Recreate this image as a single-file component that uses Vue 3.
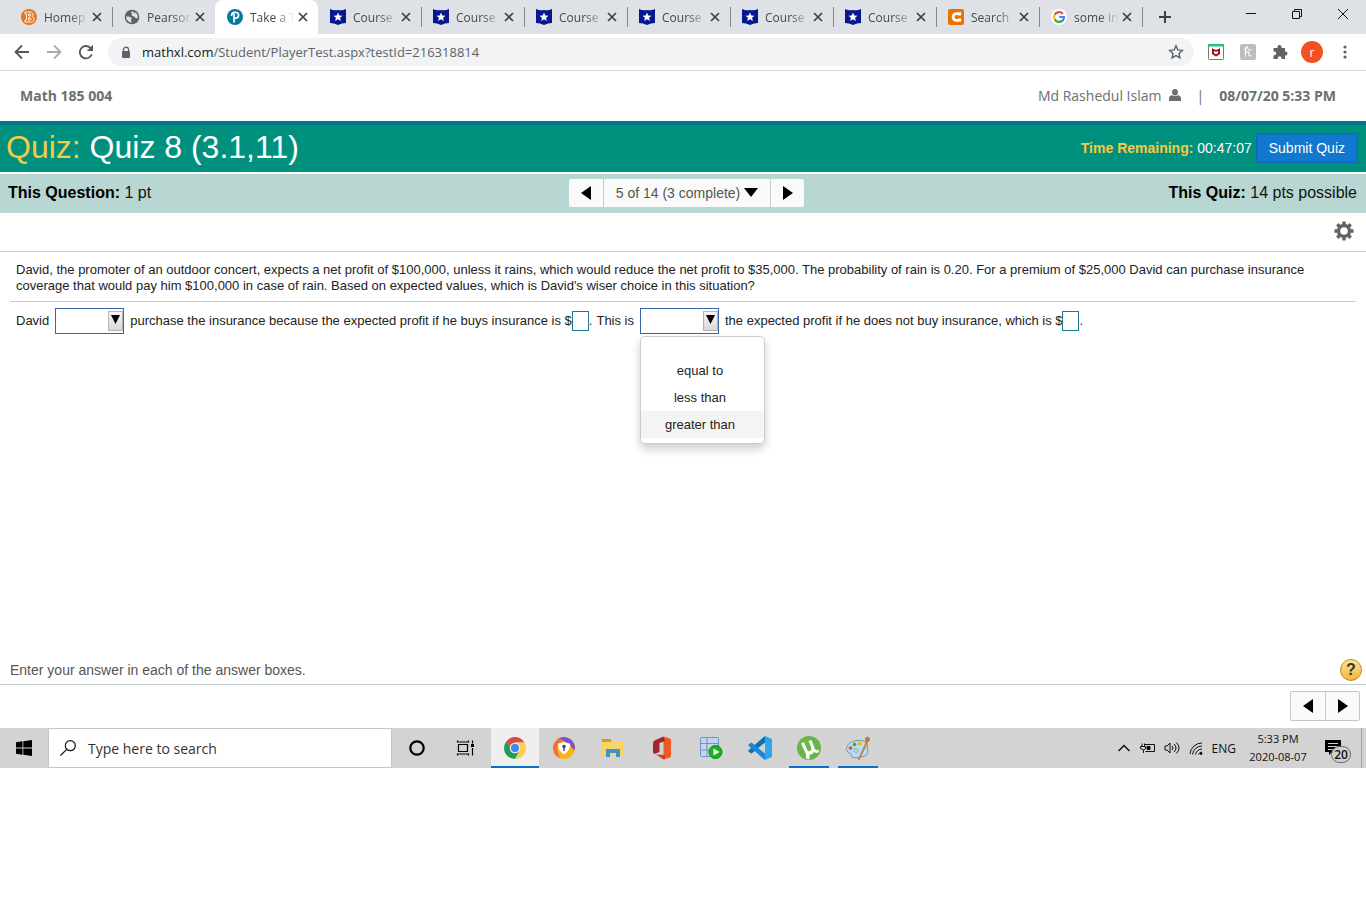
<script setup>
import { ref } from 'vue'

const tabs = [
  { icon: 'bb', title: 'Homep' },
  { icon: 'globe', title: 'Pearson' },
  { icon: 'pearson', title: 'Take a T', active: true },
  { icon: 'star', title: 'Course' },
  { icon: 'star', title: 'Course' },
  { icon: 'star', title: 'Course' },
  { icon: 'star', title: 'Course' },
  { icon: 'star', title: 'Course' },
  { icon: 'star', title: 'Course' },
  { icon: 'chegg', title: 'Search' },
  { icon: 'google', title: 'some in' },
]

const options = ['', 'equal to', 'less than', 'greater than']
const hovered = ref(3)
const shouldBuy = ref('')
const comparison = ref('')
const profitWith = ref('')
const profitWithout = ref('')

function pick(option) {
  comparison.value = option
}
</script>

<template>
  <div class="screen">
    <header class="browser">
      <div class="tab-strip">
        <div class="tabs">
          <div v-for="(tab, i) in tabs" :key="i" class="tab" :class="{ active: tab.active, plain: i === 1 }">
            <svg v-if="tab.icon === 'bb'" class="favicon" viewBox="0 0 16 16">
              <circle cx="8" cy="8" r="8" fill="#e6761c" />
              <path d="M4 3h5.500a2.500 2.500 0 0 1 1.600 4.500A2.800 2.800 0 0 1 9.500 13H4v-2h1.500V5H4ZM7.500 5h1.800q1.200 1 0 2H7.500ZM7.500 8.800h2q1.300 1.100 0 2.200h-2Z" fill="none" stroke="#fff" stroke-width=".9" />
            </svg>
            <svg v-else-if="tab.icon === 'globe'" class="favicon" viewBox="0 0 16 16">
              <circle cx="8" cy="8" r="7.300" fill="#5f6368" />
              <path d="M2.200 7.200 5.500 7.800 8 9 7 10.500 7.500 13.800A6 6 0 0 1 2.200 7.200ZM8.500 2 7 3.600 8.200 5 7.400 6.600 10.300 7.500 12 9.400 13.800 8.600A6 6 0 0 0 11.800 3.400L10.500 4.200Z" fill="#dee1e6" />
            </svg>
            <svg v-else-if="tab.icon === 'pearson'" class="favicon" viewBox="0 0 16 16">
              <circle cx="8" cy="8" r="8" fill="#047a9c" />
              <path d="M7 12.800V5M4.600 6.200C4.600 2.500 11.600 2 11.600 6.200 11.600 8.600 9 9.400 7.500 8.900" fill="none" stroke="#fff" stroke-width="1.700" stroke-linecap="round" />
            </svg>
            <svg v-else-if="tab.icon === 'star'" class="favicon" viewBox="0 0 16 16">
              <path d="M0 0Q4 2 8 1 12 2 16 0V14Q12 14 8 16 4 14 0 14Z" fill="#06188f" />
              <path d="m8 3.500 1.300 2.900 3.200.3-2.400 2.100.7 3.200L8 10.300 5.200 12l.7-3.200L3.500 6.700l3.200-.3Z" fill="#fff" />
            </svg>
            <svg v-else-if="tab.icon === 'chegg'" class="favicon" viewBox="0 0 16 16">
              <rect width="16" height="16" rx="2" fill="#eb7100" />
              <path d="M11.700 6.500V4.600H8.500A3.400 3.400 0 0 0 8.500 11.400H11.700V9.500" fill="none" stroke="#fff" stroke-width="2.800" />
            </svg>
            <svg v-else class="favicon" viewBox="0 0 16 16">
              <circle cx="8" cy="8" r="8" fill="#fff" />
              <g fill="none" stroke-width="2.200">
                <path d="M11.800 4.700A5 5 0 0 0 3.700 5.600" stroke="#ea4335" />
                <path d="M3.700 5.500A5 5 0 0 0 3.700 10.500" stroke="#fbbc05" />
                <path d="M3.700 10.400A5 5 0 0 0 11.500 11.600" stroke="#34a853" />
                <path d="M8.200 8H13A5 5 0 0 1 11.300 11.800" stroke="#4285f4" />
              </g>
            </svg>
            <span class="tab-title">{{ tab.title }}</span>
            <button class="tab-close" aria-label="Close tab">
              <svg viewBox="0 0 10 10"><path d="m1 1 8 8M9 1 1 9" /></svg>
            </button>
          </div>
          <button class="new-tab" aria-label="New tab">
            <svg viewBox="0 0 12 12"><path d="M6 0v12M0 6h12" /></svg>
          </button>
        </div>
        <div class="window-controls">
          <button aria-label="Minimize"><svg viewBox="0 0 12 12"><path d="M1 5.500h10" /></svg></button>
          <button aria-label="Restore"><svg viewBox="0 0 12 12"><path d="M1.500 3.500h7v7h-7ZM3.500 3V1.500h7v7H9" /></svg></button>
          <button aria-label="Close"><svg viewBox="0 0 12 12"><path d="m1 1 10 10M11 1 1 11" /></svg></button>
        </div>
      </div>

      <div class="toolbar">
        <button class="nav" aria-label="Back">
          <svg viewBox="0 0 16 16"><path d="M15 8H2M8 1.500 1.500 8 8 14.500" /></svg>
        </button>
        <button class="nav disabled" aria-label="Forward">
          <svg viewBox="0 0 16 16"><path d="M1 8h13M8 1.500 14.500 8 8 14.500" /></svg>
        </button>
        <button class="nav" aria-label="Reload">
          <svg viewBox="0 0 16 16">
            <path d="M13.800 10.400A6.200 6.200 0 1 1 12.400 3.800L14 5.500" />
            <path d="M15 .8v6.200h-6.200Z" class="solid" />
          </svg>
        </button>
        <div class="address">
          <svg class="lock" viewBox="0 0 10 12">
            <path d="M2.500 5V3.200a2.500 2.500 0 0 1 5 0V5" fill="none" stroke="#5f6368" stroke-width="1.300" />
            <rect x="1" y="4.500" width="8" height="7" rx="1" fill="#5f6368" />
          </svg>
          <span class="url"><b>mathxl.com</b>/Student/PlayerTest.aspx?testId=216318814</span>
          <button class="bookmark" aria-label="Bookmark this page">
            <svg viewBox="0 0 16 16"><path d="m8 1.800 1.800 4.100 4.500.5-3.300 3 .9 4.500L8 11.600l-3.900 2.300.9-4.500-3.300-3 4.500-.5Z" /></svg>
          </button>
        </div>
        <div class="extensions">
          <svg viewBox="0 0 16 16">
            <rect x=".5" y=".5" width="15" height="15" rx="1" fill="#fff" stroke="#77797c" />
            <path d="M0 0h16v2.500H0Z" fill="#20c57c" />
            <path d="M4 4.200 8 6l4-1.800v6L8 12.500l-4-2.300ZM6 7v2.200l2 1 2-1V7L8 8Z" fill="#a3121d" fill-rule="evenodd" />
          </svg>
          <svg viewBox="0 0 16 16">
            <rect width="16" height="16" rx="2" fill="#bdbdbd" />
            <path d="M4 5.500C6 5.500 8 4 7.300 3S5.500 3.500 5.500 6v6.500M5.500 9.500C7 7 9 7 8.800 9S8.500 12.800 11.500 11.500M8 5.800h3.500" fill="none" stroke="#fff" stroke-width="1.100" />
          </svg>
          <svg viewBox="0 0 16 16">
            <path d="M2 4h3.500V3a2 2 0 1 1 4 0v1H13v3.500h.500a2 2 0 1 1 0 4H13V15H9.500v-.8a1.900 1.900 0 0 0-3.800 0v.8H1.500v-3.800h.8a1.900 1.900 0 0 0 0-3.800H1.500V4Z" fill="#5f6368" />
          </svg>
        </div>
        <button class="avatar">r</button>
        <button class="menu" aria-label="Menu">
          <svg viewBox="0 0 4 16"><circle cx="2" cy="3" r="1.600" /><circle cx="2" cy="8" r="1.600" /><circle cx="2" cy="13" r="1.600" /></svg>
        </button>
      </div>
    </header>

    <main class="quiz">
      <div class="account">
        <strong>Math 185 004</strong>
        <div class="account-user">
          <span>Md Rashedul Islam</span>
          <svg viewBox="0 0 12 12"><ellipse cx="6" cy="3.200" rx="2.900" ry="3.200" /><path d="M0 12V9.500Q0 6.400 3.200 6.200 6 8 8.800 6.200 12 6.400 12 9.500V12Z" /></svg>
          <span class="bar">|</span>
          <strong>08/07/20 5:33 PM</strong>
        </div>
      </div>

      <div class="title-bar">
        <h1><span>Quiz:</span> Quiz 8 (3.1,11)</h1>
        <div class="timer">
          <div><b>Time Remaining:</b> 00:47:07</div>
          <button class="submit">Submit Quiz</button>
        </div>
      </div>

      <div class="sub-bar">
        <div class="question-points"><b>This Question:</b> 1 pt</div>
        <div class="pager">
          <button aria-label="Previous question"><svg class="arrow" viewBox="0 0 10 14"><path d="M10 0v14L0 7Z" /></svg></button>
          <button class="pager-list">5 of 14 (3 complete)<svg class="down" viewBox="0 0 14 9"><path d="M0 0h14L7 9Z" /></svg></button>
          <button aria-label="Next question"><svg class="arrow" viewBox="0 0 10 14"><path d="m0 0v14l10-7Z" /></svg></button>
        </div>
        <div class="quiz-points"><b>This Quiz:</b> 14 pts possible</div>
      </div>

      <div class="settings">
        <button aria-label="Settings">
          <svg viewBox="0 0 20 20">
            <circle cx="10" cy="10" r="5.500" fill="none" stroke="#636363" stroke-width="3.400" />
            <path d="M10 .5v3M10 16.500v3M.5 10h3M16.500 10h3M3.300 3.300l2.200 2.200M14.500 14.500l2.200 2.200M3.300 16.700l2.200-2.200M14.500 5.500l2.200-2.200" stroke="#636363" stroke-width="3.400" />
          </svg>
        </button>
      </div>

      <section class="question">
        <p class="prompt">
          David, the promoter of an outdoor concert, expects a net profit of $100,000, unless it rains, which would reduce the net profit to $35,000. The probability of rain is 0.20. For a premium of $25,000 David can purchase insurance coverage that would pay him $100,000 in case of rain. Based on expected values, which is David's wiser choice in this situation?
        </p>
        <div class="answer">
          <label for="should-buy">David</label>
          <div class="dropdown">
            <select id="should-buy" v-model="shouldBuy">
              <option value=""></option>
              <option>should</option>
              <option>should not</option>
            </select>
            <i><svg viewBox="0 0 10 10"><path d="M0 0h10L5 10Z" /></svg></i>
          </div>
          <label for="profit-with">purchase the insurance because the expected profit if he buys insurance is $</label>
          <input id="profit-with" v-model="profitWith" type="text">
          <span>.</span>
          <label class="sentence" for="comparison">This is</label>
          <div class="dropdown wide">
            <select id="comparison" v-model="comparison">
              <option v-for="option in options" :key="option" :value="option">{{ option }}</option>
            </select>
            <i><svg viewBox="0 0 10 10"><path d="M0 0h10L5 10Z" /></svg></i>
            <ul class="choices" role="listbox" aria-label="Comparison">
              <li
                v-for="(option, i) in options"
                :key="i"
                role="option"
                :aria-selected="comparison === option"
                :class="{ hovered: hovered === i }"
                @mouseenter="hovered = i"
                @click="pick(option)"
              >{{ option }}</li>
            </ul>
          </div>
          <label for="profit-without">the expected profit if he does not buy insurance, which is $</label>
          <input id="profit-without" v-model="profitWithout" type="text">
          <span>.</span>
        </div>
      </section>

      <div class="hint">
        <span>Enter your answer in each of the answer boxes.</span>
        <button class="help">?</button>
      </div>
      <div class="steps">
        <div class="pager outlined">
          <button aria-label="Back one step"><svg class="arrow" viewBox="0 0 10 14"><path d="M10 0v14L0 7Z" /></svg></button>
          <button aria-label="Forward one step"><svg class="arrow" viewBox="0 0 10 14"><path d="m0 0v14l10-7Z" /></svg></button>
        </div>
      </div>
    </main>

    <footer class="taskbar">
      <button class="start" aria-label="Start">
        <svg viewBox="0 0 16 16"><path d="M0 2.200 6.500 1.300V7.600H0ZM7.300 1.200 16 0V7.600H7.300ZM0 8.400H6.500V14.700L0 13.800ZM7.300 8.400H16V16L7.300 14.800Z" /></svg>
      </button>
      <label class="search">
        <svg viewBox="0 0 16 16"><circle cx="10.300" cy="5.700" r="5" /><path d="M6.700 9.300.5 15.500" /></svg>
        <input type="text" placeholder="Type here to search">
      </label>
      <div class="apps">
        <button class="app" aria-label="Cortana">
          <svg viewBox="0 0 24 24"><circle cx="12" cy="12" r="6.700" fill="none" stroke="#000" stroke-width="2.200" /></svg>
        </button>
        <button class="app" aria-label="Task view">
          <svg viewBox="0 0 24 24" fill="none" stroke="#000" stroke-width="1.200"><path d="M4.500 8.500h9v7h-9ZM3.500 4.500v1.500h11V4.500M3.500 19.500V18h11v1.500M18.500 4.500v3M18.500 12v7.500" /><path d="M17 9.500h3" stroke-width="3" /></svg>
        </button>
        <button class="app current running" aria-label="Chrome">
          <svg viewBox="0 0 24 24">
            <path d="M12 12 2.500 6.500A11 11 0 0 1 21.500 6.500H12Z" fill="#dd4b3e" />
            <path d="M12 12 2.500 6.500A11 11 0 0 0 12 23L16.800 14.700Z" fill="#1f9d58" />
            <path d="M12 6.500h9.500A11 11 0 0 1 12 23l4.800-8.300Z" fill="#ffcd46" />
            <circle cx="12" cy="12" r="5.300" fill="#f1f1f1" />
            <circle cx="12" cy="12" r="4.200" fill="#4688f1" />
          </svg>
        </button>
        <button class="app" aria-label="Secure browser">
          <svg viewBox="0 0 24 24">
            <circle cx="12" cy="12" r="11" fill="#f7b51c" />
            <path d="M6 3A11 11 0 0 1 22.800 14Q19 12 18 8 11 5 6 3Z" fill="#7950d9" />
            <path d="M1.200 14A11 11 0 0 1 7 2.200L12 4 6 8Q4 14 8 22A11 11 0 0 1 1.200 14Z" fill="#f0703a" />
            <path d="M12 6q3 1.500 6 1.500.5 7-6 11-6.500-4-6-11Q9 7.500 12 6Z" fill="#fff" />
            <circle cx="12" cy="10.500" r="1.700" fill="#3d3f68" /><path d="M11.300 11h1.400v4h-1.400Z" fill="#3d3f68" />
          </svg>
        </button>
        <button class="app" aria-label="File Explorer">
          <svg viewBox="0 0 24 24">
            <path d="M1 3h9l1 2h12v15H1Z" fill="#fbd264" /><path d="M1 3h9v3H1Z" fill="#d69c1e" />
            <path d="M5 13h14v8h-4v-4H9v4H5Z" fill="#3c94ca" />
          </svg>
        </button>
        <button class="app" aria-label="Office">
          <svg viewBox="0 0 24 24">
            <path d="M13.500.5 20 2.500Q21 3 21 4v16q0 1-1 1.500l-6.500 2Z" fill="#ee5a24" />
            <path d="M13.500.5 15 5 9.500 7v9L4.500 18Q3 17.500 3 16V7q0-1.500 1.500-2.500Z" fill="#a4262c" />
            <path d="m6 18.500 9 .5v4l-1.500.5Z" fill="#d83b20" />
          </svg>
        </button>
        <button class="app" aria-label="Server">
          <svg viewBox="0 0 24 24">
            <rect x="1.500" y="1.500" width="18" height="19" rx="1" fill="#c3d5ef" stroke="#6e90c3" />
            <path d="M2 7.500h17M2 14h17M8 2v18" stroke="#7291bd" />
            <circle cx="16.500" cy="16" r="6.500" fill="#16b51c" stroke="#098a0e" /><path d="m14.500 12.500 6 3.500-6 3.500Z" fill="#fff" />
          </svg>
        </button>
        <button class="app" aria-label="Code editor">
          <svg viewBox="0 0 24 24">
            <path d="M17 0v6.500L3.500 17.500 1 16 0 14.700Z" fill="#0972b8" /><path d="m3.500 6.500 13.500 11V24L0 9.300 1 8Z" fill="#168bd4" />
            <path d="M17 0 24 3v18l-7 3Z" fill="#2da7ef" />
          </svg>
        </button>
        <button class="app running inset" aria-label="Torrent client">
          <svg viewBox="0 0 24 24">
            <circle cx="12" cy="12" r="12" fill="#6ab44a" />
            <path d="M4 7.500 7 6l3 7.500q1 2.500 3 1.500t1-4L11.500 5l3-1L18 13q1 2 3 .5l1 2.500q-3.500 2-5-.5-1 3.500-4.500 3 .5 2.500-.5 5L8.500 22Q10 20 8 16Z" fill="#fff" />
          </svg>
        </button>
        <button class="app running inset" aria-label="Paint">
          <svg viewBox="0 0 24 24">
            <path d="M.5 14Q0 6 11 4.500q9-1 10.500 4.500-1 3 .5 6 0 5-7 6-7 1.500-9.500 0 1-2.500-1-3Q1.500 17 .5 14Z" fill="#b8dcee" stroke="#6f9cb4" />
            <circle cx="4.500" cy="12" r="1.800" fill="#d94b3b" /><circle cx="8.500" cy="8.500" r="1.800" fill="#4ba52f" /><circle cx="13.500" cy="7.500" r="2" fill="#efb52e" /><circle cx="10" cy="14.500" r="1.700" fill="#eef8fb" stroke="#639bb9" />
            <path d="M11.500 23.500 20 6l1.800 1L13.500 24Z" fill="#d28244" /><path d="m19.500 6-.5-3.500 2-2 3 1.500-.5 2.500-2 2.500Z" fill="#b8764a" />
          </svg>
        </button>
      </div>
      <div class="tray">
        <svg viewBox="0 0 16 16"><path d="m2.500 11 5.500-5.500 5.500 5.500" stroke-width="1.500" /></svg>
        <svg viewBox="0 0 16 16"><path d="M5 4.500h9.500v7H5.500M2 3.500v3M4.500 3.500v3M.500 6.500h5v2L3.500 10 .500 8.500ZM3.500 10v3" /><path d="M7 6.500h3v3H7Z" fill="#000" /></svg>
        <svg viewBox="0 0 16 16"><path d="M1 6h2l3-3v10l-3-3H1ZM8 6q2 2 0 4M10 4q4 4 0 8M12.500 2.500q5 5.500 0 11" /></svg>
        <svg viewBox="0 0 16 16"><path d="M2 14A12 12 0 0 1 14 3M4.500 14.500A9.500 9.500 0 0 1 14 6M7.500 14.500A6.500 6.500 0 0 1 14 9M10.500 14.500A4 4 0 0 1 14 12" /><circle cx="13" cy="13.500" r="1" fill="#000" /></svg>
        <span>ENG</span>
        <div class="clock"><span>5:33 PM</span><span>2020-08-07</span></div>
        <div class="notifications">
          <svg viewBox="0 0 16 16"><path d="M0 0h16v12H7l-3 3v-3H0Z" fill="#000" stroke="none" /><path d="M3 3.500h10M3 6.500h10M3 9.500h6" stroke="#d2d2d2" /></svg>
          <b>20</b>
        </div>
        <i class="peek"></i>
      </div>
    </footer>
  </div>
</template>

<style>
body {
  margin: 0;
  background: #fff;
}
</style>

<style scoped>
* {
  box-sizing: border-box;
}

.screen {
  font-family: "Liberation Sans", Arial, sans-serif;
  font-size: 13px;
  color: #222;
}

button {
  display: flex;
  align-items: center;
  justify-content: center;
  padding: 0;
  border: 0;
  background: none;
  font: inherit;
  color: inherit;
}

svg {
  display: block;
  flex: none;
}

/* browser chrome */
.browser {
  font-family: "Open Sans", "Noto Sans", sans-serif;
  border-bottom: 1px solid #d6d8da;
}

.tab-strip {
  display: flex;
  justify-content: space-between;
  height: 34px;
  background: #dee1e6;
}

.tabs {
  display: flex;
  padding-left: 9px;
}

.tab {
  position: relative;
  display: flex;
  align-items: center;
  width: 103px;
  padding: 0 9px 0 12px;
  font-size: 12px;
  color: #45494d;
}

.tab::after {
  content: "";
  position: absolute;
  right: -1px;
  top: 7px;
  width: 1px;
  height: 20px;
  background: #85888c;
}

.tab.active::after,
.tab.plain::after {
  display: none;
}

.tab.active {
  background: #fff;
  border-radius: 8px 8px 0 0;
}

.favicon {
  width: 16px;
  height: 16px;
}

.tab-title {
  flex: 1;
  margin-left: 7px;
  overflow: hidden;
  white-space: nowrap;
  mask-image: linear-gradient(90deg, #000 55%, transparent 95%);
}

.tab-close {
  width: 12px;
  height: 16px;
}

.tab-close svg {
  width: 10px;
  height: 10px;
  stroke: #3c4043;
  stroke-width: 1.7;
}

.new-tab {
  width: 46px;
}

.new-tab svg {
  width: 12px;
  height: 12px;
  stroke: #3c4043;
  stroke-width: 2;
}

.window-controls {
  display: flex;
}

.window-controls button {
  width: 46px;
  height: 28px;
}

.window-controls svg {
  width: 12px;
  height: 12px;
  fill: none;
  stroke: #111;
}

.toolbar {
  display: flex;
  align-items: center;
  height: 36px;
  padding: 0 11px 0 6px;
}

.nav {
  width: 32px;
  height: 28px;
}

.nav svg {
  width: 16px;
  height: 16px;
  fill: none;
  stroke: #55585c;
  stroke-width: 1.8;
}

.nav .solid {
  fill: #55585c;
  stroke: none;
}

.nav.disabled {
  opacity: 0.5;
}

.address {
  display: flex;
  flex: 1;
  align-items: center;
  height: 28px;
  margin-left: 6px;
  padding: 0 10px 0 13px;
  border-radius: 14px;
  background: #f1f3f4;
}

.lock {
  width: 10px;
  height: 13px;
}

.url {
  flex: 1;
  margin-left: 11px;
  font-size: 13px;
  color: #5f6368;
}

.url b {
  font-weight: 400;
  color: #202124;
}

.bookmark svg {
  width: 16px;
  height: 16px;
  fill: none;
  stroke: #5f6368;
  stroke-width: 1.4;
}

.extensions {
  display: flex;
  gap: 16px;
  margin-left: 14px;
}

.extensions svg {
  width: 16px;
  height: 16px;
}

.avatar {
  width: 22px;
  height: 22px;
  margin: 0 12px 0 13px;
  border-radius: 50%;
  background: #f4511e;
  color: #fff;
  font-size: 12px;
}

.menu {
  width: 20px;
}

.menu svg {
  width: 4px;
  height: 16px;
  fill: #5f6368;
}

/* quiz page */
.account {
  display: flex;
  align-items: center;
  justify-content: space-between;
  height: 50px;
  padding: 0 30px 2px 20px;
  font-family: "Open Sans", "Noto Sans", sans-serif;
  font-size: 14px;
  color: #6a7070;
}

.account-user {
  display: flex;
  align-items: center;
}

.account-user svg {
  width: 12px;
  height: 12px;
  margin-left: 8px;
  fill: #6a7070;
}

.bar {
  margin: 0 15px;
}

.title-bar {
  display: flex;
  align-items: center;
  justify-content: space-between;
  height: 51px;
  padding: 0 8px 2px 6px;
  border-top: 4px solid #007a8c;
  background: #00917e;
  color: #fff;
}

h1 {
  margin: 0;
  font-size: 32px;
  font-weight: 400;
}

h1 span,
.timer b {
  color: #f3cb45;
}

.timer {
  display: flex;
  align-items: center;
  gap: 4px;
  font-size: 14px;
}

.submit {
  height: 30px;
  padding: 0 12px;
  border: 1px solid #0b68bd;
  border-radius: 3px;
  background: #1178ce;
}

.sub-bar {
  display: flex;
  align-items: center;
  height: 39px;
  margin-top: 2px;
  padding: 0 9px 2px 8px;
  background: #b9d7d2;
  font-size: 16px;
  color: #111;
}

.question-points,
.quiz-points {
  flex: 1;
}

.quiz-points {
  text-align: right;
}

.sub-bar b {
  color: #000;
}

.pager {
  display: flex;
  border-radius: 2px;
  background: #fafafa;
}

.sub-bar .pager {
  margin-left: 8px;
}

.pager button {
  width: 34px;
  height: 28px;
}

.pager button + button {
  border-left: 1px solid #c9cccd;
}

.pager .pager-list {
  width: auto;
  padding: 0 12px;
  gap: 4px;
  font-size: 14px;
  color: #555;
}

.arrow {
  width: 10px;
  height: 14px;
  fill: #000;
}

.down {
  width: 14px;
  height: 9px;
  fill: #000;
}

.settings {
  display: flex;
  align-items: center;
  justify-content: flex-end;
  height: 39px;
  padding: 0 12px 2px;
  border-bottom: 1px solid #c9cbd0;
}

.settings svg {
  width: 20px;
  height: 20px;
}

.question {
  min-height: 408px;
  padding: 0 10px;
}

.prompt {
  margin: 0;
  padding: 10px 6px 7px;
  border-bottom: 1px solid #c9cbcc;
  line-height: 16px;
}

.answer {
  display: flex;
  align-items: center;
  padding: 6px;
  line-height: 16px;
  white-space: nowrap;
}

.answer input {
  width: 17px;
  height: 20px;
  padding: 0;
  border: 1px solid #1a7a94;
  background: #fff;
  font: inherit;
}

.sentence {
  margin-left: 4px;
}

.dropdown {
  position: relative;
  width: 69px;
  height: 26px;
  margin: 0 6px;
}

.dropdown.wide {
  width: 79px;
}

.dropdown select {
  width: 100%;
  height: 26px;
  padding: 0 18px 0 4px;
  border: 1px solid #3765a8;
  border-radius: 0;
  background: #fff;
  font: inherit;
  appearance: none;
}

.dropdown i {
  position: absolute;
  top: 3px;
  right: 1px;
  display: flex;
  justify-content: center;
  width: 15px;
  height: 20px;
  padding-top: 3px;
  border: 1px solid #b5b5b5;
  background: linear-gradient(#f6f6f6, #d8d8d8);
  pointer-events: none;
}

.dropdown i svg {
  width: 9px;
  height: 9px;
}

.choices {
  position: absolute;
  top: 28px;
  left: 0;
  width: 125px;
  margin: 0;
  padding: 0 0 5px;
  border: 1px solid #ccc;
  border-radius: 5px;
  background: #fff;
  box-shadow: 0 5px 10px rgba(0, 0, 0, 0.2);
  list-style: none;
}

.choices li {
  height: 27px;
  padding-right: 5px;
  line-height: 27px;
  text-align: center;
}

.choices li:first-child {
  height: 20px;
}

.choices .hovered {
  background: #f4f4f4;
}

.hint {
  display: flex;
  align-items: center;
  justify-content: space-between;
  height: 25px;
  padding: 0 4px 4px 10px;
  border-bottom: 1px solid #c4cacc;
  font-size: 14px;
  color: #555;
}

.help {
  width: 22px;
  height: 22px;
  border: 1px solid #ba8c35;
  border-radius: 50%;
  background: linear-gradient(#ffe48e, #f2b53b);
  font-size: 16px;
  font-weight: 700;
  color: #333;
}

.steps {
  display: flex;
  justify-content: flex-end;
  padding: 6px 6px 7px;
}

.outlined {
  border: 1px solid #c6c6c6;
}

/* taskbar */
.taskbar {
  display: flex;
  height: 40px;
  background: #d3d3d3;
  color: #111;
  font-family: "Open Sans", "Noto Sans", sans-serif;
}

.start {
  width: 48px;
}

.start svg {
  width: 16px;
  height: 16px;
}

.search {
  display: flex;
  align-items: center;
  width: 344px;
  padding: 0 12px 0 11px;
  border: 1px solid #c6c6c6;
  background: #fff;
}

.search svg {
  width: 16px;
  height: 16px;
  fill: none;
  stroke: #111;
  stroke-width: 1.2;
}

.search input {
  flex: 1;
  min-width: 0;
  margin-left: 12px;
  padding: 0;
  border: 0;
  outline: 0;
  background: none;
  font: inherit;
  font-size: 14px;
}

.search input::placeholder {
  color: #333;
  opacity: 1;
}

.apps {
  display: flex;
  flex: 1;
  gap: 1px;
  padding-left: 1px;
}

.app {
  width: 48px;
}

.app svg {
  width: 24px;
  height: 24px;
}

.current {
  background: #efefef;
}

.running {
  border-bottom: 2px solid #0b70c4;
  padding-top: 2px;
}

.inset {
  width: 40px;
  margin: 0 4px;
}

.tray {
  display: flex;
  align-items: center;
  gap: 8px;
  font-size: 12px;
}

.tray svg {
  width: 16px;
  height: 16px;
  fill: none;
  stroke: #111;
}

.clock {
  display: flex;
  flex-direction: column;
  align-items: center;
  width: 68px;
  font-size: 11px;
  line-height: 18px;
}

.notifications {
  position: relative;
  width: 28px;
  height: 16px;
  margin-left: 5px;
}

.notifications b {
  position: absolute;
  top: 6px;
  left: 6px;
  width: 20px;
  height: 17px;
  border: 1px solid #666;
  border-radius: 9px;
  background: #d0d0d0;
  font-weight: 600;
  line-height: 15px;
  text-align: center;
}

.peek {
  align-self: stretch;
  width: 5px;
  border-left: 1px solid #a5a5a5;
}
</style>
